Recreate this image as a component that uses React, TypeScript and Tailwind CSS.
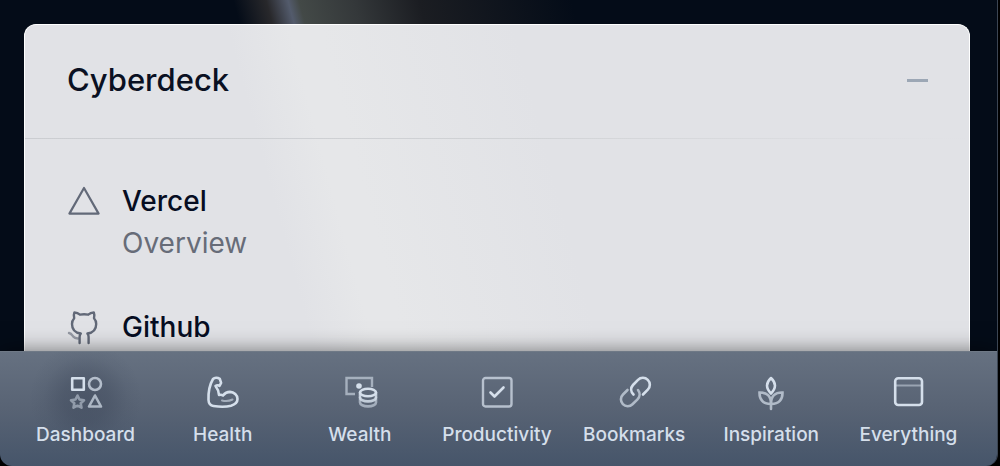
import type { ReactNode } from 'react'

interface IconProps {
  children: ReactNode
}

function Icon({ children }: IconProps) {
  return (
    <svg
      viewBox="0 0 32 32"
      fill="none"
      stroke="currentColor"
      strokeWidth="2.6"
      strokeLinecap="round"
      strokeLinejoin="round"
      aria-hidden="true"
      className="size-8 shrink-0 overflow-visible"
    >
      {children}
    </svg>
  )
}

const links = [
  {
    name: 'Vercel',
    detail: 'Overview',
    icon: (
      <Icon>
        <path d="M16 3 30.6 28.6H1.4Z" strokeWidth="2.2" />
      </Icon>
    ),
  },
  {
    name: 'Github',
    icon: (
      <Icon>
        <path d="M1 22c2.500.5 3 2 4.200 3.600C6.300 27 7.500 27.500 10 27.500" strokeWidth="2.4" opacity="0.6" />
        <path
          d="M11.600 32v-6c0-1.600.4-2.800 1.200-3.500C7.500 21.800 4 19.100 4 13c0-2.600.8-4.300 2.200-5.800-.6-2-.5-4 .2-5.700 2.200.1 4.200 1 5.600 2.200 2.600-.6 5.600-.6 8.200 0C21.600 2.500 23.600 1.600 25.800 1.500c.7 1.700.8 3.700.2 5.700 1.400 1.500 2.200 3.200 2.200 5.800 0 6.100-3.500 8.800-8.800 9.500.8.700 1.200 1.900 1.200 3.500v6"
          strokeWidth="2.4"
        />
      </Icon>
    ),
  },
]

const tabs = [
  {
    name: 'Dashboard',
    active: true,
    icon: (
      <Icon>
        <path d="M2.200 2.200h11.600v11.600H2.200Z" />
        <circle cx="25" cy="8" r="6" opacity="0.75" />
        <path
          d="m7.500 19.500 2 4 4.500.7-3.300 3.100.8 4.400-4-2-4 2 .8-4.400L1 24.200l4.500-.7Z"
          opacity="0.5"
        />
        <path d="M25 19.500 31 30.500H19Z" opacity="0.7" />
      </Icon>
    ),
  },
  {
    name: 'Health',
    icon: (
      <Icon>
        <path d="M12 19c-.3-4-1.500-6.500-3.500-9 1.400-1.200 2.600-1 4-.2l1.600-2.900-1.300-4.100C10.500 1.300 7.500 1.500 6 3 2.500 9 1.200 17 1.500 24c.2 4 1.500 5.500 5 6 6 .9 13 .9 17.500-.3 4-1.200 6.500-3.400 6.500-6.700 0-4-3.500-7-7.500-7.100-3.500 0-5.500 1.700-7 3.600-1-.8-2.300-1-4-.5Z" />
        <path d="M15 24.500c3.500.9 7.500.5 10.500-1" strokeWidth="2" opacity="0.6" />
      </Icon>
    ),
  },
  {
    name: 'Wealth',
    icon: (
      <Icon>
        <path d="M11 18H2.500V2H28v9" strokeLinecap="butt" strokeLinejoin="miter" strokeWidth="2.4" opacity="0.6" />
        <circle cx="15" cy="10" r="2.800" fill="currentColor" stroke="none" />
        <ellipse cx="24" cy="16.500" rx="8" ry="3.800" />
        <path d="M16 16.500v5c0 2.200 3.500 3.900 8 3.900s8-1.700 8-3.900v-5" opacity="0.85" />
        <path d="M16 21.500v5c0 2.200 3.500 3.900 8 3.900s8-1.700 8-3.900v-5" opacity="0.6" />
      </Icon>
    ),
  },
  {
    name: 'Productivity',
    icon: (
      <Icon>
        <rect x="2" y="2" width="28.500" height="28.500" rx="2.500" strokeWidth="2.4" opacity="0.75" />
        <path d="m9.500 16.500 4 4 9-9" strokeWidth="2.600" />
      </Icon>
    ),
  },
  {
    name: 'Bookmarks',
    icon: (
      <Icon>
        <path d="M9.500 14 5 18.500a6.800 6.800 0 0 0 9.500 9.800l5-5c2.600-2.600 2.800-6.300.5-9.300" opacity="0.7" />
        <path d="M15.500 18.500c-3-3-3-6.800-.5-9.500l5-5.200a6.900 6.900 0 0 1 9.800 9.800L25 18.500" />
      </Icon>
    ),
  },
  {
    name: 'Inspiration',
    icon: (
      <Icon>
        <path d="M16 2c-5.300 5-5.300 10 0 15.500 5.300-5.500 5.300-10.500 0-15.500Z" />
        <path
          d="M16 33v-5.500M16 28C8 28.200 4.300 23.500 4.500 16.500 12 16.300 16 20 16 28ZM16 28c8 .2 11.700-4.500 11.500-11.500C20 16.300 16 20 16 28Z"
          strokeLinejoin="miter"
          opacity="0.7"
        />
      </Icon>
    ),
  },
  {
    name: 'Everything',
    icon: (
      <Icon>
        <path d="M4 9.500h26" strokeWidth="2" opacity="0.5" />
        <rect x="3.200" y="2.200" width="26.800" height="26.800" rx="3" />
      </Icon>
    ),
  },
]

function CyberdeckCard() {
  return (
    <section className="grow rounded-t-xl border border-b-0 border-white bg-[#e1e2e6] bg-[linear-gradient(75deg,transparent_28%,#e6e7e9_34%,#e6e7e9_37%,transparent_56%)]">
      <header className="flex items-center justify-between pt-[31px] pr-10 pb-[34px] pl-[42px]">
        <h1 className="text-[31px] leading-12 font-medium text-[#0a1022]">Cyberdeck</h1>
        <button type="button" aria-label="Collapse" className="text-[#9ca7b5]">
          <svg viewBox="0 0 22 22" stroke="currentColor" strokeWidth="3" aria-hidden="true" className="size-[22px]">
            <path d="M0 11.500h21" />
          </svg>
        </button>
      </header>
      <div className="h-px bg-linear-to-r from-[#cbcdd1] via-[#d0d2d5] to-transparent" />
      <ul className="flex flex-col gap-[42px] px-[43px] pt-[41px] text-[28px] leading-[42px]">
        {links.map((link) => (
          <li key={link.name}>
            <a href="#" className="flex gap-[22px]">
              <span className="pt-[5px] text-[#626978]">{link.icon}</span>
              <span>
                <span className="block font-medium text-[#060d22]">{link.name}</span>
                {link.detail && <span className="block text-[#676c78]">{link.detail}</span>}
              </span>
            </a>
          </li>
        ))}
      </ul>
    </section>
  )
}

function TabBar() {
  return (
    <nav className="z-10 grid shrink-0 grid-cols-7 border-t border-[#6f7986] bg-linear-to-b from-[#667181] via-[#586374] to-[#46556a] pr-5 pl-[17px] shadow-[0_0_20px_rgba(0,0,0,0.5)]">
      {tabs.map((tab) => (
        <a
          key={tab.name}
          href="#"
          aria-current={tab.active ? 'page' : undefined}
          className="flex flex-col items-center gap-[13px] pt-6 pb-[17px] text-[19px] leading-7 font-medium text-[#d5dfeb] aria-[current=page]:bg-[radial-gradient(circle_56px_at_50%_46px,rgba(51,61,80,0.4),rgba(51,61,80,0.3)_40%,rgba(51,61,80,0.08)_75%,transparent)]"
        >
          {tab.icon}
          {tab.name}
        </a>
      ))}
    </nav>
  )
}

export default function App() {
  return (
    <div className="h-screen bg-black pr-[2px] font-['Inter',sans-serif]">
      <div className="flex h-full flex-col overflow-hidden rounded-b-xl border-r border-[#3c4654] bg-[#040c18]">
        <main className="flex min-h-0 grow flex-col bg-[linear-gradient(75deg,transparent_30%,#28282b_33%,#535b6c_35%,#434947_36%,#34383a_41%,#1b1d22_47%,transparent_61%)] pt-6 pr-[27px] pl-6">
          <CyberdeckCard />
        </main>
        <TabBar />
      </div>
    </div>
  )
}
